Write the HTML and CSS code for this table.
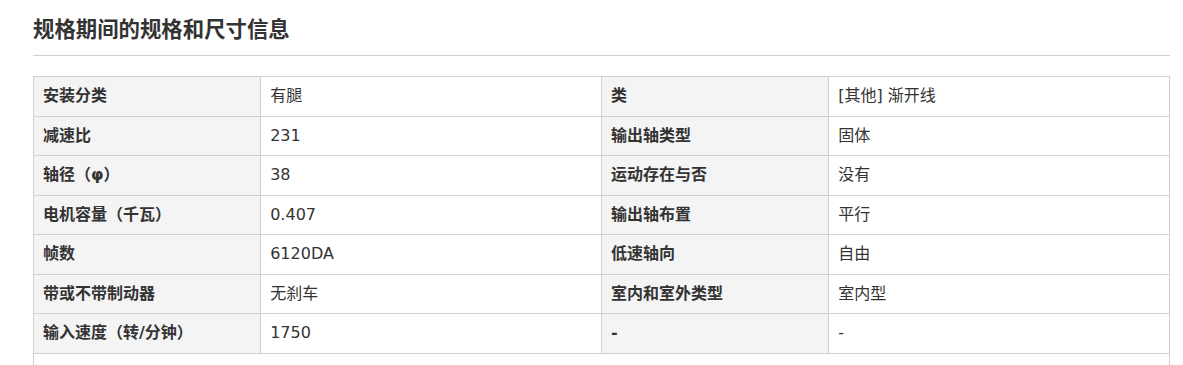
FILE: index.html
```html
<!DOCTYPE html>
<html lang="zh-CN">
<head>
<meta charset="utf-8">
<title>规格</title>
<link rel="stylesheet" href="styles.css">
</head>
<body>
<div class="page">
  <h2 class="title">规格期间的规格和尺寸信息</h2>
  <table class="spec">
    <colgroup>
      <col class="c-label"><col class="c-value"><col class="c-label"><col class="c-value">
    </colgroup>
    <tbody>
      <tr><th>安装分类</th><td>有腿</td><th>类</th><td>[其他] 渐开线</td></tr>
      <tr><th>减速比</th><td>231</td><th>输出轴类型</th><td>固体</td></tr>
      <tr><th>轴径（φ）</th><td>38</td><th>运动存在与否</th><td>没有</td></tr>
      <tr><th>电机容量（千瓦）</th><td>0.407</td><th>输出轴布置</th><td>平行</td></tr>
      <tr><th>帧数</th><td>6120DA</td><th>低速轴向</th><td>自由</td></tr>
      <tr><th>带或不带制动器</th><td>无刹车</td><th>室内和室外类型</th><td>室内型</td></tr>
      <tr><th>输入速度（转/分钟）</th><td>1750</td><th>-</th><td>-</td></tr>
      <tr><td class="blank" colspan="4">&nbsp;</td></tr>
    </tbody>
  </table>
</div>
</body>
</html>
```

FILE: styles.css
```css
html, body {
  margin: 0;
  padding: 0;
  background: #fff;
}
body {
  font-family: "DejaVu Sans", "Noto Sans CJK SC", sans-serif;
  color: #333;
}
.page {
  width: 1137px;
  margin-left: 33px;
  padding-top: 13px;
}
.title {
  margin: 0 0 20px;
  padding: 0 0 12px;
  font-size: 21.4px;
  line-height: 30px;
  font-weight: bold;
  font-family: "Noto Sans CJK SC", sans-serif;
  color: #333;
  border-bottom: 1px solid #cfcfcf;
}
.spec {
  width: 1137px;
  border-collapse: collapse;
  table-layout: fixed;
  font-size: 16px;
}
.c-label { width: 20%; }
.c-value { width: 30%; }
.spec th,
.spec td {
  border: 1px solid #d0d0d0;
  padding: 10px 8px 10px 9px;
  line-height: 18.57px;
  text-align: left;
  vertical-align: middle;
  font-family: "DejaVu Sans", "Noto Sans CJK SC", sans-serif;
  color: #333;
}
.spec td {
  padding-left: 9px;
  font-weight: normal;
}
.spec th {
  padding-left: 9px;
  background: #f4f4f4;
  font-weight: bold;
}
```
